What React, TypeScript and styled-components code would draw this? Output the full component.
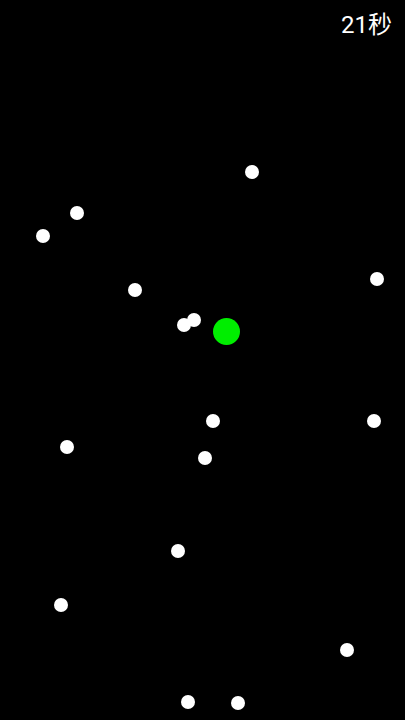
import React from 'react';
import styled, { createGlobalStyle } from 'styled-components';

const GlobalStyle = createGlobalStyle`
  html, body {
    margin: 0;
    padding: 0;
    background: #000;
  }
`;

const Field = styled.div`
  position: relative;
  width: 405px;
  height: 720px;
  background: #000;
  overflow: hidden;
  font-family: Roboto, "Noto Sans CJK SC", sans-serif;
`;

const TopBar = styled.div`
  display: flex;
  justify-content: flex-end;
  padding: 9px 13px 0 0;
`;

const Timer = styled.span`
  color: #fff;
  font-size: 24px;
  line-height: 32px;
`;

const Dot = styled.div<{ $size: number; $color: string }>`
  position: absolute;
  width: ${(p) => p.$size}px;
  height: ${(p) => p.$size}px;
  margin: ${(p) => -p.$size / 2}px 0 0 ${(p) => -p.$size / 2}px;
  border-radius: 50%;
  background: ${(p) => p.$color};
`;

const dots: [number, number][] = [
  [252, 172],
  [77, 213],
  [43, 236],
  [135, 290],
  [377, 279],
  [184, 325],
  [194, 320],
  [213, 421],
  [374, 421],
  [67, 447],
  [205, 458],
  [178, 551],
  [61, 605],
  [347, 650],
  [188, 702],
  [238, 703],
];

const player = { x: 226, y: 331 };

export default function App() {
  return (
    <>
      <GlobalStyle />
      <Field>
        <TopBar>
          <Timer>21秒</Timer>
        </TopBar>
        {dots.map(([x, y], i) => (
          <Dot key={i} $size={14} $color="#fff" style={{ left: x, top: y }} />
        ))}
        <Dot $size={27} $color="#00ee00" style={{ left: player.x, top: player.y }} />
      </Field>
    </>
  );
}
